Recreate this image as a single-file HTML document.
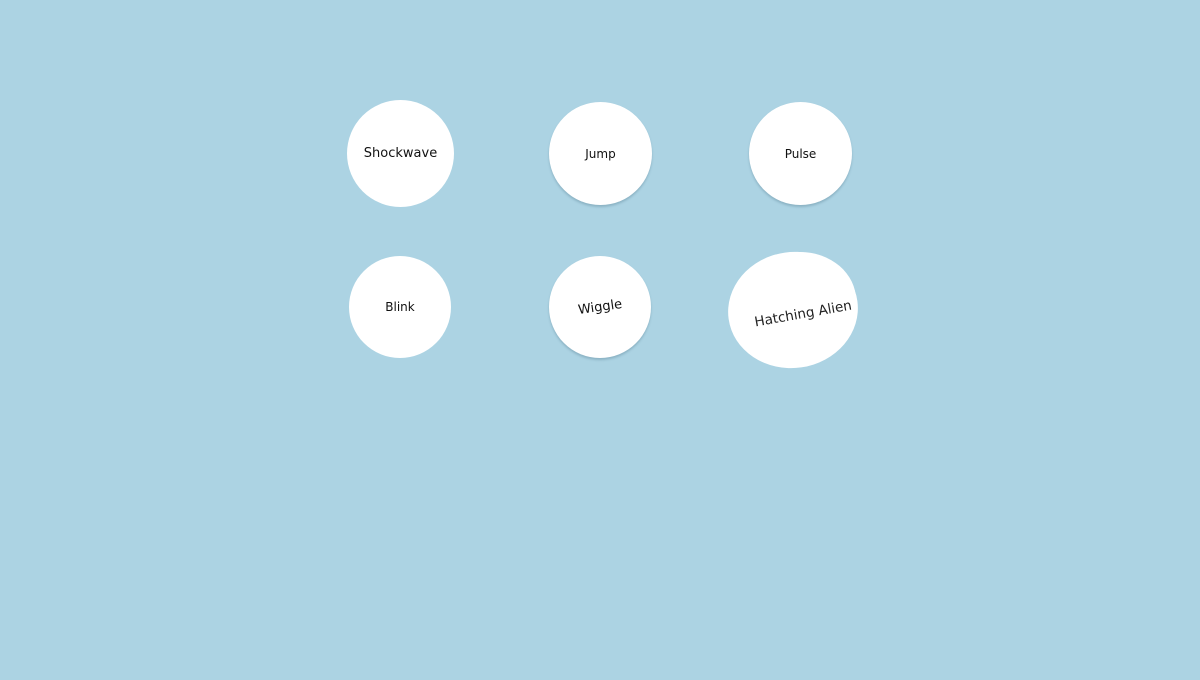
<!DOCTYPE html>
<html><head><style>
html,body{margin:0;padding:0;}
body{width:1200px;height:680px;background:#acd3e3;position:relative;overflow:hidden;font-family:"DejaVu Sans","Liberation Sans",sans-serif;}
.c{position:absolute;background:#fff;border-radius:50%;display:flex;align-items:center;justify-content:center;font-size:12px;color:#111;}
.s{box-shadow:0 2px 2px rgba(80,120,140,0.35);}
</style></head><body>
<div class="c" style="left:347px;top:100px;width:107px;height:107px;font-size:13px;">Shockwave</div>
<div class="c s" style="left:549px;top:102px;width:103px;height:103px;">Jump</div>
<div class="c s" style="left:749px;top:102px;width:103px;height:103px;">Pulse</div>
<div class="c" style="left:349px;top:256px;width:102px;height:102px;">Blink</div>
<div class="c s" style="left:549px;top:256px;width:102px;height:102px;"><span style="transform:rotate(-8deg);display:inline-block;font-size:13px;">Wiggle</span></div>
<svg style="position:absolute;left:0;top:0" width="1200" height="680">
<ellipse cx="793" cy="310" rx="65" ry="58" transform="rotate(-8 793 310)" fill="#fff"/>
<ellipse cx="800" cy="300" rx="56" ry="48" fill="#fff"/>
<text x="803" y="318" transform="rotate(-10 803 313)" text-anchor="middle" font-family="DejaVu Sans, Liberation Sans, sans-serif" font-size="13.5" fill="#222">Hatching Alien</text>
</svg>
</body></html>
